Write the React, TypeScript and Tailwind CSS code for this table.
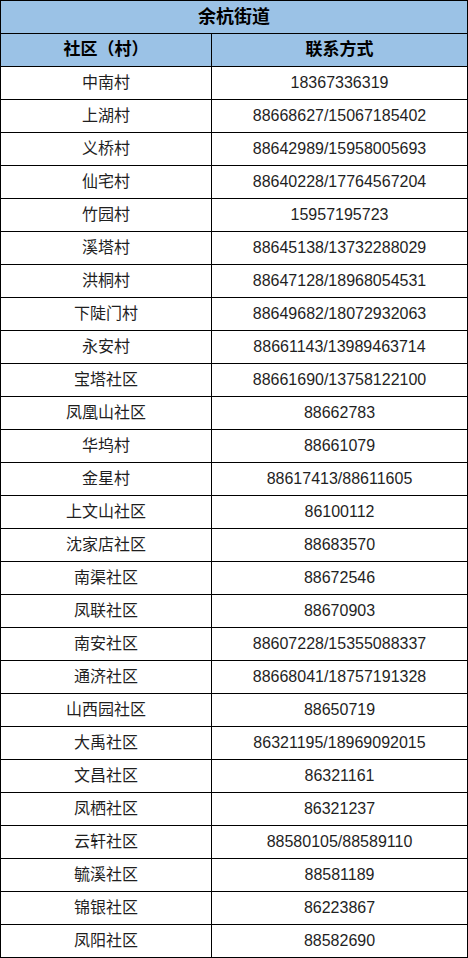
import React from 'react';

const rows: [string, string][] = [
  ['中南村', '18367336319'],
  ['上湖村', '88668627/15067185402'],
  ['义桥村', '88642989/15958005693'],
  ['仙宅村', '88640228/17764567204'],
  ['竹园村', '15957195723'],
  ['溪塔村', '88645138/13732288029'],
  ['洪桐村', '88647128/18968054531'],
  ['下陡门村', '88649682/18072932063'],
  ['永安村', '88661143/13989463714'],
  ['宝塔社区', '88661690/13758122100'],
  ['凤凰山社区', '88662783'],
  ['华坞村', '88661079'],
  ['金星村', '88617413/88611605'],
  ['上文山社区', '86100112'],
  ['沈家店社区', '88683570'],
  ['南渠社区', '88672546'],
  ['凤联社区', '88670903'],
  ['南安社区', '88607228/15355088337'],
  ['通济社区', '88668041/18757191328'],
  ['山西园社区', '88650719'],
  ['大禹社区', '86321195/18969092015'],
  ['文昌社区', '86321161'],
  ['凤栖社区', '86321237'],
  ['云轩社区', '88580105/88589110'],
  ['毓溪社区', '88581189'],
  ['锦银社区', '86223867'],
  ['凤阳社区', '88582690'],
];

const font = "font-['Liberation_Sans','Noto_Sans_CJK_SC',sans-serif]";

export default function App() {
  return (
    <div className={`w-[468px] bg-white border-t border-l border-r border-black text-[16px] text-[#1f1f1f] ${font}`}>
      {/* title */}
      <div className="h-[33px] border-b border-black bg-[#9bc2e6] flex items-center justify-center font-bold text-[18px] text-black">
        余杭街道
      </div>

      {/* header */}
      <div className="h-[33px] border-b border-black bg-[#9bc2e6] flex font-bold text-[17px] text-black">
        <div className="w-[211px] border-r border-black flex items-center justify-center">社区（村）</div>
        <div className="flex-1 flex items-center justify-center">联系方式</div>
      </div>

      {rows.map(([name, phone]) => (
        <div key={name} className="h-[33px] border-b border-black flex">
          <div className="w-[211px] border-r border-black flex items-center justify-center">{name}</div>
          <div className="flex-1 flex items-center justify-center">{phone}</div>
        </div>
      ))}
    </div>
  );
}
